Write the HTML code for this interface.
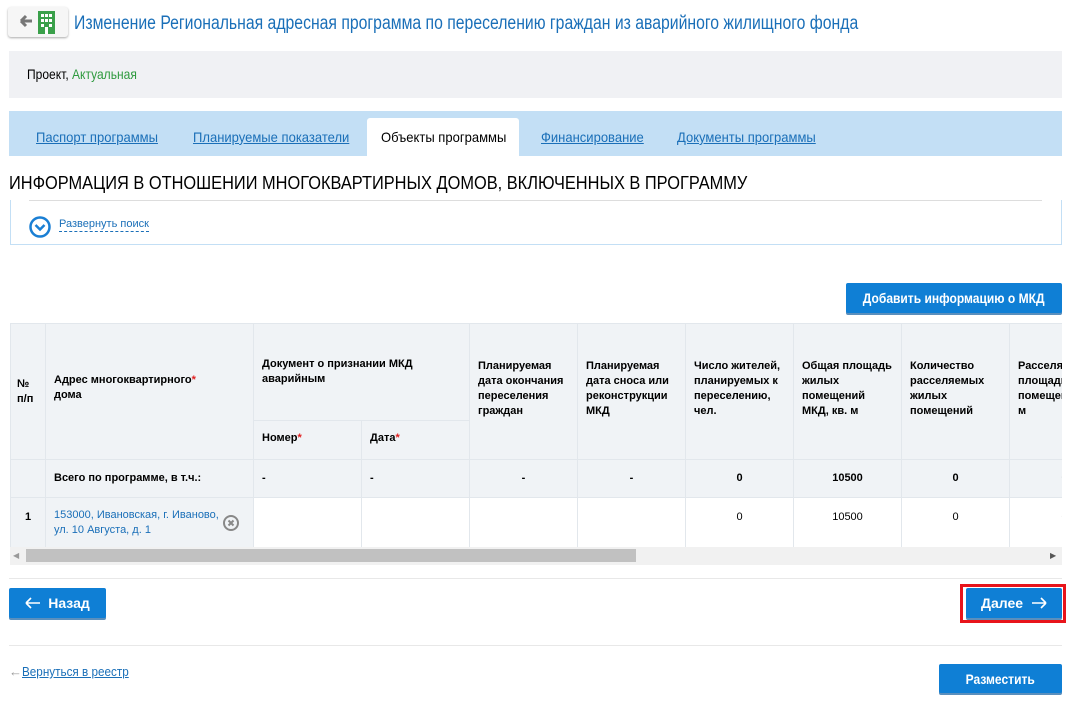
<!DOCTYPE html>
<html><head><meta charset="utf-8"><style>
*{margin:0;padding:0;box-sizing:border-box}
body{width:1069px;height:709px;background:#fff;font-family:"Liberation Sans",sans-serif;position:relative;overflow:hidden;color:#000}
.a{position:absolute;white-space:nowrap}
.c{display:inline-block;transform:scaleX(.86);transform-origin:left center}
.tab{position:absolute;top:129px;font-size:14px;color:#1a6fb8}
.tab .c{transform:scaleX(.93);text-decoration:underline}
.btn{position:absolute;background:#0f7fd5;color:#fff;font-weight:bold;font-size:14px;border-radius:2px;box-shadow:0 2px 0 #5a8fbd;display:flex;align-items:center;justify-content:center}
.btn .c{transform-origin:center}
table{position:absolute;left:10px;top:323px;border-collapse:collapse;font-size:11px;font-weight:bold;table-layout:fixed}
td{border:1px solid #e2e7ec;vertical-align:top;padding:0 8px;line-height:15px;white-space:normal}
.h td{background:#f0f3f6}
.w td{background:#fff}
.s{color:#e02020}
</style></head><body>
<div class="a" style="left:8px;top:7px;width:60px;height:30px;border-radius:3px;background:#f6f6f6;box-shadow:0 1px 2px #aaa"></div>
<svg class="a" style="left:17px;top:11px" width="48" height="24"><path d="M4 10h11M4 10l5-5M4 10l5 5" stroke="#777" stroke-width="3" fill="none"/><rect x="21" y="0" width="17" height="23" fill="#3aa04a"/><g fill="#fff"><rect x="24" y="3" width="3" height="3"/><rect x="28" y="3" width="3" height="3"/><rect x="32" y="3" width="3" height="3"/><rect x="24" y="8" width="3" height="3"/><rect x="28" y="8" width="3" height="3"/><rect x="32" y="8" width="3" height="3"/><rect x="24" y="13" width="3" height="3"/><rect x="32" y="13" width="3" height="3"/><rect x="28" y="16" width="3" height="7"/></g></svg>
<div class="a" style="left:74px;top:13px;font-size:19px;color:#1a6fb8"><span class="c" style="transform:scaleX(.83)">Изменение Региональная адресная программа по переселению граждан из аварийного жилищного фонда</span></div>
<div class="a" style="left:9px;top:51px;width:1053px;height:47px;background:#f0f1f4"></div>
<div class="a" style="left:27px;top:66px;font-size:14px"><span class="c">Проект, <span style="color:#2e9a3e">Актуальная</span></span></div>
<div class="a" style="left:9px;top:111px;width:1053px;height:45px;background:#c3dff5"></div>
<div class="a" style="left:367px;top:118px;width:152px;height:38px;background:#fff;border-radius:3px 3px 0 0"></div>
<div class="tab" style="left:36px"><span class="c">Паспорт программы</span></div>
<div class="tab" style="left:193px"><span class="c">Планируемые показатели</span></div>
<div class="tab" style="left:381px;color:#000"><span class="c" style="text-decoration:none">Объекты программы</span></div>
<div class="tab" style="left:541px"><span class="c">Финансирование</span></div>
<div class="tab" style="left:677px"><span class="c">Документы программы</span></div>
<div class="a" style="left:9px;top:173px;font-size:18px"><span class="c" style="transform:scaleX(.91)">ИНФОРМАЦИЯ В ОТНОШЕНИИ МНОГОКВАРТИРНЫХ ДОМОВ, ВКЛЮЧЕННЫХ В ПРОГРАММУ</span></div>
<div class="a" style="left:29px;top:200px;width:1013px;border-top:1px solid #ddd"></div>
<div class="a" style="left:10px;top:200px;width:1052px;height:45px;border:1px solid #c3dff5;border-top:none"></div>
<svg class="a" style="left:29px;top:216px" width="22" height="22"><circle cx="11" cy="11" r="9.5" fill="none" stroke="#1a7fd4" stroke-width="2.5"/><path d="M6.5 9l4.5 4.5 4.5-4.5" fill="none" stroke="#1a7fd4" stroke-width="2.5"/></svg>
<div class="a" style="left:59px;top:218px;font-size:11px;color:#1a6fb8;border-bottom:1px dashed #1a6fb8;line-height:13px">Развернуть поиск</div>
<div class="btn" style="left:846px;top:283px;width:216px;height:30px"><span class="c">Добавить информацию о МКД</span></div>
<div class="a" style="left:10px;top:323px;width:1052px;height:242px;overflow:hidden">
<table style="left:0;top:0;width:1110px">
<colgroup><col style="width:35px"><col style="width:208px"><col style="width:108px"><col style="width:108px"><col style="width:108px"><col style="width:108px"><col style="width:108px"><col style="width:108px"><col style="width:108px"><col style="width:110px"></colgroup>
<tr class="h" style="height:97px"><td rowspan="2" style="vertical-align:middle;padding:0 6px">№<br>п/п</td><td rowspan="2" style="padding-top:49px">Адрес многоквартирного<span class="s">*</span><br>дома</td><td colspan="2" style="padding-top:33px">Документ о признании МКД<br>аварийным</td><td rowspan="2" style="padding-top:35px">Планируемая дата окончания переселения граждан</td><td rowspan="2" style="padding-top:35px">Планируемая дата сноса или реконструкции МКД</td><td rowspan="2" style="padding-top:35px">Число жителей, планируемых к переселению, чел.</td><td rowspan="2" style="padding-top:35px">Общая площадь жилых помещений МКД, кв. м</td><td rowspan="2" style="padding-top:35px">Количество расселяемых жилых помещений</td><td rowspan="2" style="padding-top:35px">Расселяемая площадь помещений, кв. м</td></tr>
<tr class="h" style="height:39px"><td style="padding-top:10px">Номер<span class="s">*</span></td><td style="padding-top:10px">Дата<span class="s">*</span></td></tr>
<tr class="h" style="height:38px"><td></td><td style="vertical-align:middle">Всего по программе, в т.ч.:</td><td style="vertical-align:middle">-</td><td style="vertical-align:middle">-</td><td style="vertical-align:middle;text-align:center">-</td><td style="vertical-align:middle;text-align:center">-</td><td style="vertical-align:middle;text-align:center">0</td><td style="vertical-align:middle;text-align:center">10500</td><td style="vertical-align:middle;text-align:center">0</td><td style="vertical-align:middle;text-align:center">0</td></tr>
<tr class="w" style="height:50px"><td style="background:#f0f3f6;padding-top:12px;text-align:center">1</td><td style="background:#f0f3f6;padding-top:10px;font-weight:normal;color:#1a6fb8;position:relative">153000, Ивановская, г. Иваново,<br>ул. 10 Августа, д. 1<svg style="position:absolute;left:177px;top:17px" width="16" height="16"><circle cx="8" cy="8" r="7" fill="none" stroke="#888" stroke-width="2"/><path d="M5.5 5.5l5 5M10.5 5.5l-5 5" stroke="#888" stroke-width="2"/></svg></td><td></td><td></td><td></td><td></td><td style="padding-top:12px;text-align:center;font-weight:normal">0</td><td style="padding-top:12px;text-align:center;font-weight:normal">10500</td><td style="padding-top:12px;text-align:center;font-weight:normal">0</td><td style="padding-top:12px;text-align:center;font-weight:normal">0</td></tr>
</table>
<div class="a" style="left:0;top:224px;width:1052px;height:18px;background:#f1f1f1"></div>
<div class="a" style="left:16px;top:226px;width:610px;height:13px;background:#c1c1c1"></div>
<div class="a" style="left:3px;top:228px;font-size:8px;color:#999">◀</div>
<div class="a" style="left:1040px;top:228px;font-size:8px;color:#555">▶</div>
</div>
<div class="a" style="left:9px;top:578px;width:1053px;border-top:1px solid #e8e8e8"></div>
<div class="btn" style="left:9px;top:588px;width:97px;height:30px"><svg width="16" height="12" style="margin-right:7px"><path d="M1 6h14M1 6l5-5M1 6l5 5" stroke="#fff" stroke-width="1.6" fill="none"/></svg><span>Назад</span></div>
<div class="a" style="left:960px;top:584px;width:106px;height:39px;border:3px solid #e8141b"></div>
<div class="btn" style="left:966px;top:588px;width:96px;height:30px"><span>Далее</span><svg width="16" height="12" style="margin-left:8px"><path d="M1 6h14M15 6l-5-5M15 6l-5 5" stroke="#fff" stroke-width="1.6" fill="none"/></svg></div>
<div class="a" style="left:9px;top:645px;width:1053px;border-top:1px solid #e8e8e8"></div>
<div class="a" style="left:9px;top:664px;font-size:13px;color:#1a6fb8"><span style="color:#999">←</span><span class="c" style="text-decoration:underline;transform:scaleX(.9)">Вернуться в реестр</span></div>
<div class="btn" style="left:939px;top:664px;width:123px;height:29px"><span class="c">Разместить</span></div>
</body></html>
